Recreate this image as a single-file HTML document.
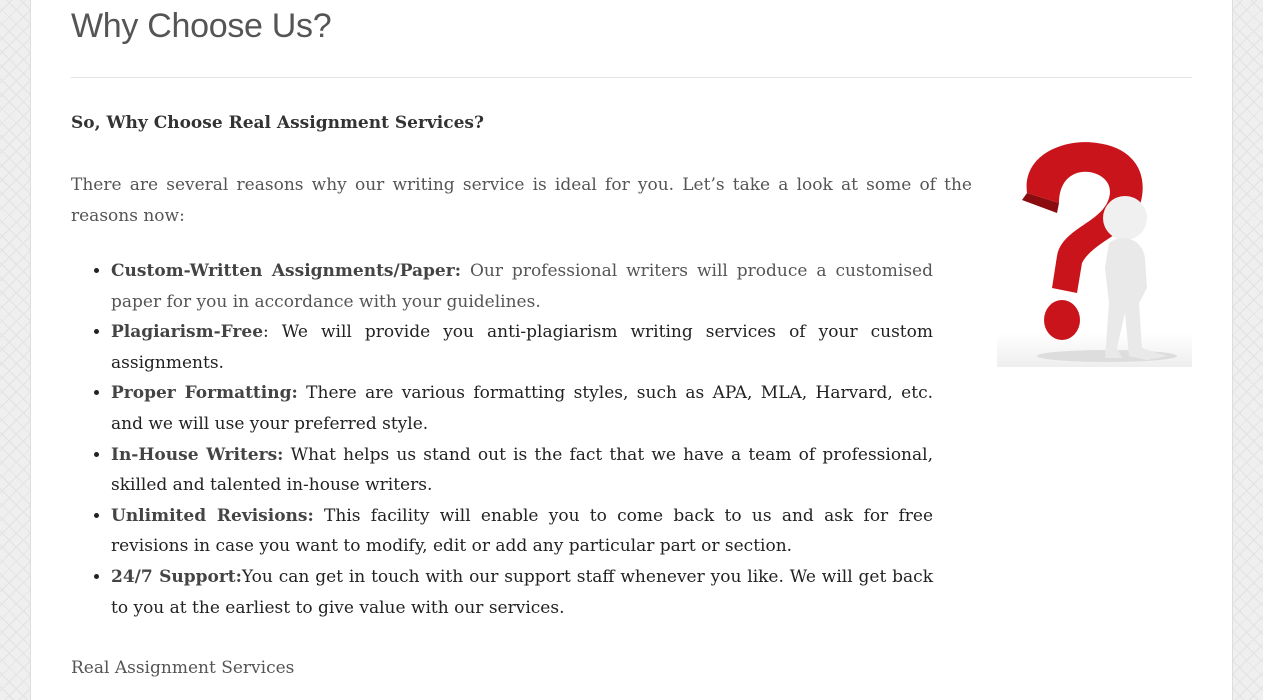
<!DOCTYPE html>
<html><head><meta charset="utf-8">
<style>
html,body{margin:0;padding:0;width:1263px;height:700px;overflow:hidden}
body{background-color:#efefef;background-image:repeating-linear-gradient(45deg,transparent 0 9px,#e2e2e2 9px 10px),repeating-linear-gradient(-45deg,transparent 0 9px,#e2e2e2 9px 10px);font-family:"DejaVu Serif","Liberation Serif",serif}
.wrap{position:absolute;left:30px;top:0;width:1201px;height:700px;background:#fff;border-left:1px solid #ddd;border-right:1px solid #ddd}
h1{position:absolute;left:40px;top:7px;margin:0;font-family:"Liberation Sans",sans-serif;font-weight:normal;font-size:34px;color:#555;letter-spacing:-0.3px}
.hr{position:absolute;left:40px;top:77px;width:1121px;height:1px;background:#e3e3e3}
.p{position:absolute;left:40px;font-size:17px;color:#555;line-height:30.6px}
.h2{top:108px;font-weight:bold;color:#333;font-size:17px}
.intro{top:170px;width:901px;text-align:justify}
ul{position:absolute;left:40px;top:256px;margin:0;padding:0 0 0 40px;width:822px;font-size:17px;line-height:30.6px;color:#222;text-align:justify;list-style:disc}
ul b{color:#444}
.last{top:653px}
.img{position:absolute;left:966px;top:138px;width:195px;height:229px;background:linear-gradient(#fff 85%,#eee)}
</style></head><body>
<div class="wrap">
<h1>Why Choose Us?</h1>
<div class="hr"></div>
<div class="p h2">So, Why Choose Real Assignment Services?</div>
<div class="p intro">There are several reasons why our writing service is ideal for you. Let’s take a look at some of the reasons now:</div>
<ul>
<li><b>Custom-Written Assignments/Paper:</b> <span style="color:#555">Our professional writers will produce a customised paper for you in accordance with your guidelines.</span></li>
<li><b>Plagiarism-Free</b>: We will provide you anti-plagiarism writing services of your custom assignments.</li>
<li><b>Proper Formatting:</b> There are various formatting styles, such as APA, MLA, Harvard, etc. and we will use your preferred style.</li>
<li><b>In-House Writers:</b> What helps us stand out is the fact that we have a team of professional, skilled and talented in-house writers.</li>
<li><b>Unlimited Revisions:</b> This facility will enable you to come back to us and ask for free revisions in case you want to modify, edit or add any particular part or section.</li>
<li><b>24/7 Support:</b>You can get in touch with our support staff whenever you like. We will get back to you at the earliest to give value with our services.</li>
</ul>
<div class="p last">Real Assignment Services</div>
<div class="img">
<svg width="195" height="229" viewBox="0 0 195 229">
<ellipse cx="110" cy="218" rx="70" ry="6" fill="#ddd"/>
<path d="M30 55 C25 15 70 0 100 5 C140 10 155 40 140 75 C130 95 95 105 85 125 L80 155 L55 150 L60 118 C65 90 105 85 112 60 C118 40 95 30 80 35 C65 40 62 55 62 65 Z" fill="#c8141a"/>
<path d="M30 55 L62 65 L60 75 L25 62 Z" fill="#8a0c10"/>
<ellipse cx="65" cy="182" rx="18" ry="20" fill="#c8141a"/>
<circle cx="128" cy="80" r="22" fill="#f0f0f0"/>
<path d="M112 105 C125 95 145 100 148 120 L150 150 L142 165 L145 210 L170 218 L150 222 L132 218 L128 175 L120 210 L125 220 L108 220 L112 165 L108 130 Z" fill="#e9e9e9"/>
</svg>
</div>
</div>
</body></html>
